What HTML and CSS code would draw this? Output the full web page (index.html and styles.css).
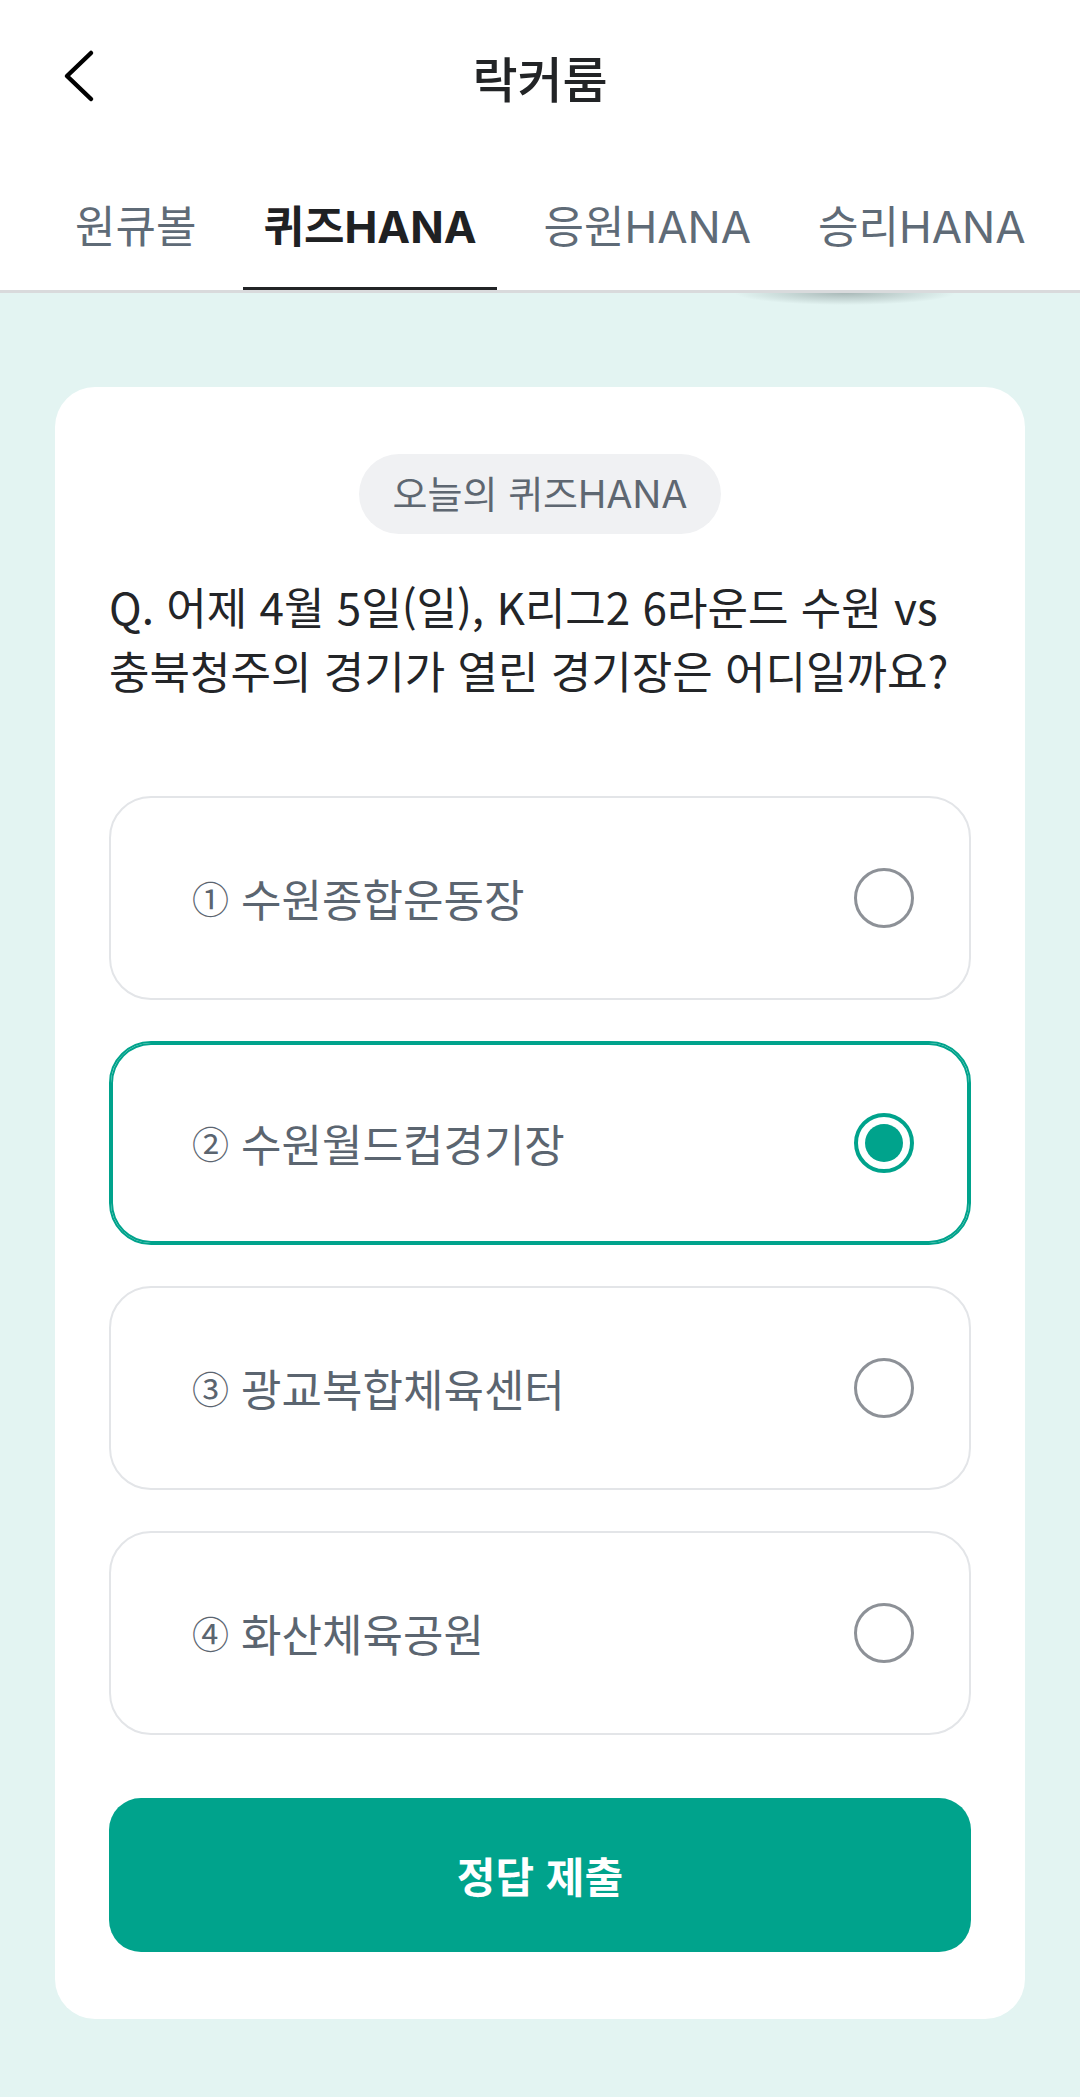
FILE: index.html
```html
<!DOCTYPE html>
<html lang="ko">
<head>
	<meta charset="UTF-8">
	<title>락커룸 - 퀴즈HANA</title>
	<link rel="stylesheet" href="styles.css">
</head>
<body>
	<header class="top">
		<div class="top-bar">
			<a href="javascript:;" class="back">
				<svg width="60" height="60" viewBox="0 0 60 60"><polyline points="42,7 18,30 42,53" fill="none" stroke="#000" stroke-width="4.5" stroke-linecap="round" stroke-linejoin="round"/></svg>
			</a>
			<h1 class="title">락커룸</h1>
			<span></span>
		</div>
		<nav class="tabs">
			<a href="javascript:;" class="tab">원큐볼</a>
			<a href="javascript:;" class="tab active">퀴즈HANA</a>
			<a href="javascript:;" class="tab">응원HANA</a>
			<a href="javascript:;" class="tab">승리HANA</a>
		</nav>
	</header>
	<main class="content">
		<div class="tab-shadow"></div>
		<section class="quiz-card">
			<div class="quiz-label"><span>오늘의 퀴즈HANA</span></div>
			<p class="question">Q. 어제 4월 5일(일), K리그2 6라운드 수원 vs 충북청주의 경기가 열린 경기장은 어디일까요?</p>
			<ul class="options">
				<li class="option"><span class="option-text"><i class="num">①</i>수원종합운동장</span><span class="radio"></span></li>
				<li class="option checked"><span class="option-text"><i class="num">②</i>수원월드컵경기장</span><span class="radio"></span></li>
				<li class="option"><span class="option-text"><i class="num">③</i>광교복합체육센터</span><span class="radio"></span></li>
				<li class="option"><span class="option-text"><i class="num">④</i>화산체육공원</span><span class="radio"></span></li>
			</ul>
			<a href="javascript:;" class="submit">정답 제출</a>
		</section>
	</main>
</body>
</html>
```

FILE: styles.css
```css
*{
	padding:0;
	margin:0;
	list-style:none;
	box-sizing:border-box;
}
body{
	min-height:2097px;
	background-color:#e3f4f2;
	font-family:"Noto Sans CJK KR","Noto Sans",sans-serif;
	color:#222426;
}
a{
	text-decoration:none;
	color:inherit;
}
.top{
	background-color:#fff;
}
.top-bar{
	display:grid;
	grid-template-columns:1fr auto 1fr;
	align-items:center;
	height:152px;
}
.back{
	display:block;
	width:60px;
	height:60px;
	margin-left:49px;
}
.back svg{
	display:block;
}
.title{
	font-size:49px;
	font-weight:500;
	color:#222426;
}
.tabs{
	display:flex;
	gap:27px;
	padding:44px 0 0 55px;
	border-bottom:3px solid #d9dadc;
	white-space:nowrap;
	overflow:hidden;
}
.tab{
	position:relative;
	padding:0 20px 32px;
	font-family:"Inter","Noto Sans CJK KR",sans-serif;
	font-size:44px;
	line-height:62px;
	color:#5f6b77;
}
.tab.active{
	font-weight:700;
	color:#1f2123;
}
.tab.active:after{
	content:"";
	position:absolute;
	left:0;
	right:0;
	bottom:-3px;
	height:6px;
	background-color:#222426;
}
.content{
	position:relative;
	padding:94px 55px 76px;
}
.tab-shadow{
	position:absolute;
	top:0;
	left:735px;
	width:220px;
	height:12px;
	background:radial-gradient(50% 100% at 50% 0,rgba(110,125,125,.5),rgba(110,125,125,0));
}
.quiz-card{
	padding:67px 54px 67px;
	border-radius:40px;
	background-color:#fff;
}
.quiz-label{
	display:flex;
	justify-content:center;
}
.quiz-label span{
	height:80px;
	padding:0 34px;
	border-radius:40px;
	background-color:#f0f1f3;
	color:#5e6771;
	font-family:"Inter","Noto Sans CJK KR",sans-serif;
	font-size:38px;
	line-height:80px;
}
.question{
	margin-top:40px;
	font-size:44px;
	line-height:64px;
	color:#232528;
	word-break:keep-all;
}
.options{
	display:flex;
	flex-direction:column;
	gap:41px;
	margin-top:94px;
}
.option{
	display:flex;
	align-items:center;
	justify-content:space-between;
	height:204px;
	padding:0 55px 0 81px;
	border:2px solid #e3e5e8;
	border-radius:42px;
}
.option.checked{
	border-color:#00a38c;
	box-shadow:inset 0 0 0 2px #00a38c;
}
.option-text{
	display:flex;
	align-items:center;
	font-size:44px;
	color:#5b6570;
}
.num{
	margin-right:12px;
	font-size:37px;
	font-style:normal;
}
.radio{
	display:flex;
	align-items:center;
	justify-content:center;
	width:60px;
	height:60px;
	border:3px solid #8d9197;
	border-radius:50%;
}
.option.checked .radio{
	border:4px solid #00a38c;
}
.option.checked .radio:after{
	content:"";
	width:38px;
	height:38px;
	border-radius:50%;
	background-color:#00a38c;
}
.submit{
	display:block;
	height:154px;
	margin-top:63px;
	border-radius:32px;
	background-color:#00a38c;
	color:#fff;
	font-size:42px;
	font-weight:700;
	line-height:154px;
	text-align:center;
}
```
